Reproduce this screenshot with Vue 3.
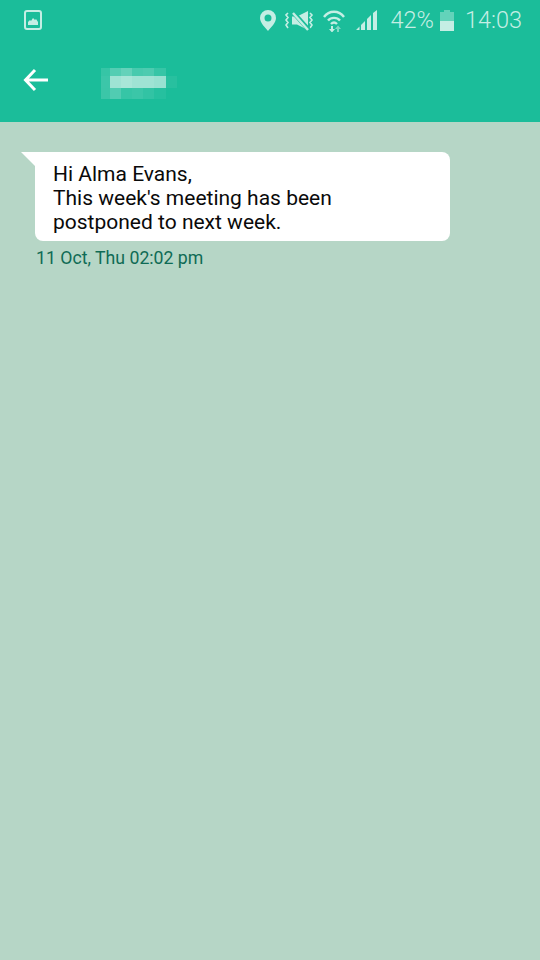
<script setup>
// pixelated name in the header, row by row
const mosaicCols = [9, 11, 11, 11, 11, 12, 11]
const mosaicRows = [
  { h: 8, cells: [0.12, 0.25, 0.32, 0.2, 0.22, 0.12, 0] },
  { h: 12, cells: [0.15, 0.58, 0.62, 0.58, 0.58, 0.55, 0.06] },
  { h: 11, cells: [0.14, 0.24, 0.12, 0.14, 0.1, 0.05, 0] }
]
const cellStyle = (row, i, a) => ({
  width: mosaicCols[i] + 'px',
  height: row.h + 'px',
  background: `rgba(255,255,255,${a})`
})
</script>

<template>
  <div class="screen">
    <div class="top">
      <div class="status">
        <svg class="ic-image" width="18" height="20" viewBox="0 0 18 20">
          <rect x="1" y="1" width="16" height="18" rx="2" fill="none" stroke="#c5eee4" stroke-width="2" />
          <path d="M4 15v-3l2-2 1 1 2-3 2 2 1-1 2 3v3z" fill="#c5eee4" />
        </svg>
        <span class="spacer"></span>
        <svg class="ic-pin" width="16" height="21" viewBox="0 0 16 21">
          <path fill-rule="evenodd" d="M8 0a8 8 0 0 1 8 8c0 5-5 9-8 13C5 17 0 13 0 8a8 8 0 0 1 8-8zm0 4.5a3.500 3.500 0 1 0 0 7 3.500 3.500 0 0 0 0-7z" fill="#c5eee4" />
        </svg>
        <svg class="ic-mute" width="29" height="21" viewBox="0 0 29 21">
          <path d="M3 3L1 5l2 2.500L1 10l2 2.500L1 15l2 3M25 3l2 2-2 2.500 2 2.500-2 2.500 2 2.500-2 3" fill="none" stroke="#c5eee4" stroke-width="1.600" />
          <path d="M7 6.500h5L23 1v19L12 14.500H7z" fill="#c5eee4" />
          <path d="M6 0l18 20" stroke="#1bbd9a" stroke-width="4.500" />
          <path d="M8 3l15 17" stroke="#c5eee4" stroke-width="2.400" />
        </svg>
        <svg class="ic-wifi" width="22" height="23" viewBox="0 0 22 23">
          <path d="M1 8C6 1 16 1 21 8M5 11.500C8 8 14 8 17 11.500M8 15c2-2 4-2 6 0" fill="none" stroke="#c5eee4" stroke-width="2.400" />
          <path d="M8 17h2v3h2l-3 3.500L6 20h2z" fill="#c5eee4" />
          <path d="M14 23v-3h-2l3-3.500 3 3.500h-2v3z" fill="#7fd9c4" />
        </svg>
        <svg class="ic-signal" width="22" height="20" viewBox="0 0 22 20">
          <path d="M0 20l3.500-3.500V20zM5 20v-5l4-4v9zM11 20V9l4-4v15zM17 20V3l4-3v20z" fill="#c5eee4" />
        </svg>
        <span class="pct">42%</span>
        <div class="battery">
          <span class="nub"></span>
          <span class="cell-empty"></span>
          <span class="cell-full"></span>
        </div>
        <span class="clock">14:03</span>
      </div>
      <div class="bar">
        <svg class="back" width="26" height="26" viewBox="0 0 26 26">
          <path d="M25 13H3M12 3L2.500 13 12 23" fill="none" stroke="#fff" stroke-width="3" />
        </svg>
        <div class="mosaic">
          <div v-for="(row, r) in mosaicRows" :key="r" class="mosaic-row">
            <span v-for="(a, i) in row.cells" :key="i" :style="cellStyle(row, i, a)"></span>
          </div>
        </div>
      </div>
    </div>

    <div class="chat">
      <div class="bubble">
        <span class="tail"></span>
        <p>Hi Alma Evans,<br />This week's meeting has been<br />postponed to next week.</p>
      </div>
      <div class="time">11 Oct, Thu 02:02 pm</div>
    </div>
  </div>
</template>

<style scoped>
.screen {
  width: 540px;
  height: 960px;
  display: flex;
  flex-direction: column;
  background: #b6d6c6;
  font-family: Roboto, "Liberation Sans", sans-serif;
  overflow: hidden;
}
.top {
  height: 122px;
  background: #1bbd9a;
}
.status {
  height: 40px;
  display: flex;
  align-items: center;
  padding: 0 18px 0 24px;
  color: #c5eee4;
}
.spacer {
  flex: 1;
}
.ic-mute {
  margin-left: 9px;
}
.ic-wifi {
  margin-left: 9px;
}
.ic-signal {
  margin-left: 11px;
}
.pct {
  margin-left: 12px;
  font-size: 23.500px;
  font-weight: 300;
}
.battery {
  margin-left: 6px;
  width: 14px;
  height: 21px;
  display: flex;
  flex-direction: column;
  align-items: center;
}
.nub {
  width: 6px;
  height: 2px;
  background: #63d3ba;
}
.cell-empty {
  width: 14px;
  height: 9px;
  background: #63d3ba;
}
.cell-full {
  width: 14px;
  height: 10px;
  background: #c5eee4;
}
.clock {
  margin-left: 11px;
  font-size: 23.500px;
  font-weight: 300;
}
.bar {
  display: flex;
  padding: 27px 0 0 23px;
}
.mosaic {
  margin: 1px 0 0 52px;
}
.mosaic-row {
  display: flex;
}
.chat {
  padding: 30px 0 0 35px;
}
.bubble {
  position: relative;
  width: 415px;
  height: 89px;
  box-sizing: border-box;
  padding: 10px 18px 7px;
  background: #fff;
  border-radius: 0 8px 8px 8px;
}
.tail {
  position: absolute;
  left: -14px;
  top: 0;
  width: 0;
  height: 0;
  border-top: 14px solid #fff;
  border-left: 14px solid transparent;
}
.bubble p {
  margin: 0;
  font-size: 21px;
  line-height: 24px;
  color: #0a0a0a;
}
.time {
  margin: 6px 0 0 1px;
  font-size: 17.700px;
  line-height: 22px;
  color: #0f6b55;
}
</style>
